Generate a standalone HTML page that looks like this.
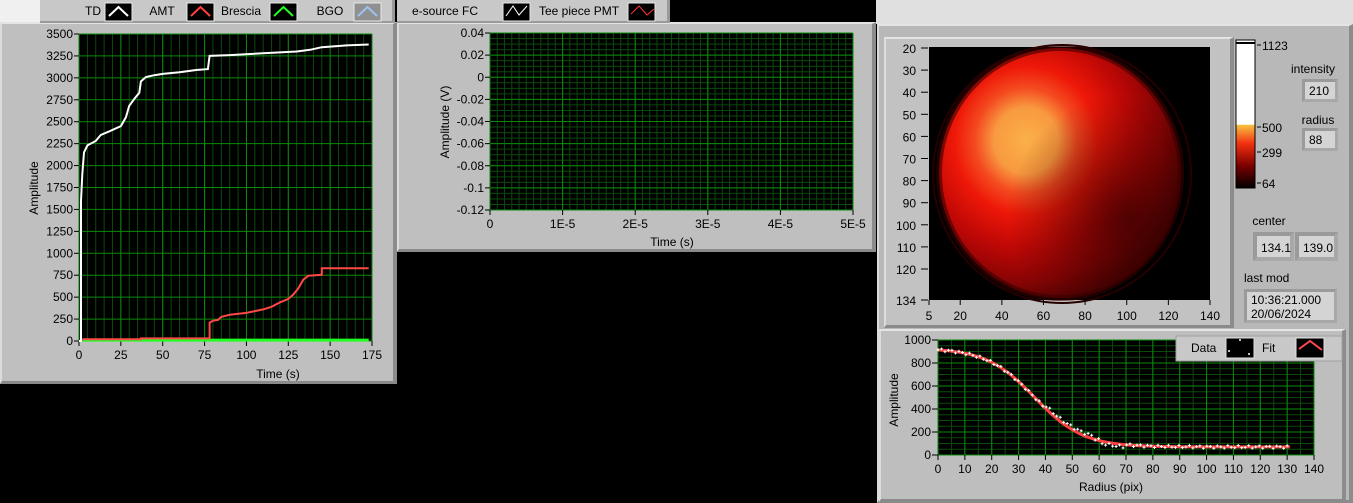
<!DOCTYPE html>
<html><head><meta charset="utf-8">
<style>
*{margin:0;padding:0;box-sizing:border-box}
body{width:1353px;height:503px;background:#000;position:relative;overflow:hidden;font-family:"Liberation Sans",sans-serif;font-size:12px;color:#000}
.a{position:absolute}
.panel{position:absolute;background:#bfbfbf;border-top:2px solid #e4e4e4;border-left:2px solid #dcdcdc;border-right:4px solid #8c8c8c;border-bottom:3px solid #8a8a8a}
.leg{position:absolute;background:#c8c8c8;border-bottom:2px solid #9a9a9a;border-right:3px solid #9a9a9a}
.box{position:absolute;background:#d4d4d4;border:3px solid #a8a8a8;border-top-color:#9a9a9a;border-left-color:#9a9a9a;padding-left:4px;font-size:12px}
svg{position:absolute;left:0;top:0}
</style></head><body>
<div class="a" style="left:0;top:0;width:40px;height:22px;background:#f0f0f0"></div>
<div class="a" style="left:876px;top:0;width:477px;height:24px;background:#e0e0e0"></div>

<div class="panel" style="left:0;top:22px;width:397px;height:362px"></div>
<div class="leg" style="left:40px;top:0;width:355px;height:23px"></div>
<div class="panel" style="left:397px;top:22px;width:479px;height:230px"></div>
<div class="leg" style="left:397px;top:0;width:273px;height:23px"></div>
<div class="panel" style="left:877px;top:24px;width:476px;height:479px;background:#b8b8b8"></div>
<div class="panel" style="left:884px;top:37px;width:350px;height:291px;background:#c2c2c2"></div>
<div class="panel" style="left:879px;top:329px;width:467px;height:173px;background:#bebebe"></div>

<svg id="s" width="1353" height="503" xmlns="http://www.w3.org/2000/svg" font-family="Liberation Sans, sans-serif" font-size="12">
<defs>
<radialGradient id="g1" cx="0.36" cy="0.37" r="0.66">
<stop offset="0" stop-color="#fbb048"/><stop offset="0.2" stop-color="#f89a40"/><stop offset="0.32" stop-color="#f44a20"/><stop offset="0.45" stop-color="#ee1808"/><stop offset="0.65" stop-color="#c00806"/><stop offset="0.85" stop-color="#8a0404"/><stop offset="1" stop-color="#500202"/></radialGradient>
<radialGradient id="g2" cx="0.78" cy="0.68" r="0.5"><stop offset="0" stop-color="#300000" stop-opacity="0.7"/><stop offset="1" stop-color="#300000" stop-opacity="0"/></radialGradient>
<linearGradient id="cb" x1="0" y1="0" x2="0" y2="1">
<stop offset="0" stop-color="#fff"/><stop offset="0.57" stop-color="#fff"/><stop offset="0.575" stop-color="#f8c040"/><stop offset="0.7" stop-color="#f23010"/><stop offset="0.85" stop-color="#7a0000"/><stop offset="1" stop-color="#000"/></linearGradient>
</defs>
</svg>
<script>
var s=document.getElementById('s'),NS='http://www.w3.org/2000/svg';
function el(t,a,txt){var e=document.createElementNS(NS,t);for(var k in a)e.setAttribute(k,a[k]);if(txt!==undefined)e.textContent=txt;s.appendChild(e);return e}
function T(x,y,t,anc,extra){var a={x:x,y:y,'text-anchor':anc||'start',fill:'#000'};for(var k in extra)a[k]=extra[k];return el('text',a,t)}
function grid(x0,y0,x1,y1,vx,hx,vmin,hmin){
 el('rect',{x:x0,y:y0,width:x1-x0,height:y1-y0,fill:'#000'});
 var v;
 if(vmin)for(v=x0;v<=x1+0.1;v+=vmin)el('line',{x1:v,y1:y0,x2:v,y2:y1,stroke:'#0b4a0b','stroke-width':1});
 if(hmin)for(v=y0;v<=y1+0.1;v+=hmin)el('line',{x1:x0,y1:v,x2:x1,y2:v,stroke:'#0b4a0b','stroke-width':1});
 for(v=x0;v<=x1+0.1;v+=vx)el('line',{x1:v,y1:y0,x2:v,y2:y1,stroke:'#0a8a0a','stroke-width':1});
 for(v=y0;v<=y1+0.1;v+=hx)el('line',{x1:x0,y1:v,x2:x1,y2:v,stroke:'#0a8a0a','stroke-width':1});
}
function legIcon(x,y,w,col,bg){el('rect',{x:x,y:y,width:w,height:18,fill:bg||'#000',stroke:'#e8e8e8'});el('polyline',{points:(x+4)+','+(y+13)+' '+(x+w/2)+','+(y+4)+' '+(x+w-4)+','+(y+13),fill:'none',stroke:col,'stroke-width':2});}
T(93,15,'TD','middle');legIcon(105,3,27,'#fff');
T(162,15,'AMT','middle');legIcon(187,3,27,'#ff4040');
T(241,15,'Brescia','middle');legIcon(270,3,27,'#20ff20');
T(330,15,'BGO','middle');legIcon(354,3,27,'#9cc4f0','#909090');
T(412,15,'e-source FC');
el('rect',{x:503,y:3,width:27,height:18,fill:'#000',stroke:'#e8e8e8'});el('polyline',{points:'506,16 513,6 519,15 527,6',fill:'none',stroke:'#fff','stroke-width':1});
T(539,15,'Tee piece PMT');
el('rect',{x:628,y:3,width:27,height:18,fill:'#000',stroke:'#e8e8e8'});el('polyline',{points:'631,14 639,6 647,15 654,9',fill:'none',stroke:'#ff3030','stroke-width':1});

var X0=79,X1=372,Y0=34,Y1=341;
grid(X0,Y0,X1,Y1,(X1-X0)/7,(Y1-Y0)/14,(X1-X0)/35,0);
for(var i=0;i<=14;i++){var v=3500-i*250,y=Y0+i*(Y1-Y0)/14;T(73,y+4,String(v),'end');el('line',{x1:74,y1:y,x2:79,y2:y,stroke:'#000'});}
for(i=0;i<=7;i++){var x=X0+i*(X1-X0)/7;T(x,359,String(i*25),'middle');el('line',{x1:x,y1:341,x2:x,y2:346,stroke:'#000'});}
T(278,378,'Time (s)','middle');
T(38,188,'Amplitude','middle',{transform:'rotate(-90 38 188)'});
function P(pts,col,sx,sy,w){var d=pts.map(function(p){return (X0+p[0]*sx).toFixed(1)+','+(Y1-p[1]*sy).toFixed(1)}).join(' ');el('polyline',{points:d,fill:'none',stroke:col,'stroke-width':w||2});}
var sx=(X1-X0)/175,sy=(Y1-Y0)/3500;
P([[2,10],[173,10]],'#20ff20',sx,sy,3);
P([[2,20],[37,20],[37,30],[78,30],[78,210],[80,230],[83,240],[85,275],[90,300],[100,320],[110,360],[115,390],[120,440],[125,480],[128,530],[131,600],[134,700],[137,745],[145,755],[145,830],[173,830]],'#ff4848',sx,sy);
P([[0,0],[1.2,0],[1.2,1600],[2,1900],[3,2150],[5,2230],[10,2280],[13,2350],[18,2390],[25,2450],[28,2550],[30,2680],[33,2760],[36,2830],[37,2960],[40,3010],[45,3030],[50,3045],[60,3065],[70,3090],[77,3100],[78,3250],[90,3260],[110,3280],[130,3300],[138,3320],[145,3350],[160,3370],[173,3380]],'#fff',sx,sy);

var MX0=490,MX1=853,MY0=33,MY1=210;
grid(MX0,MY0,MX1,MY1,(MX1-MX0)/5,(MY1-MY0)/8,(MX1-MX0)/50,(MY1-MY0)/32);
var ml=['0.04','0.02','0','-0.02','-0.04','-0.06','-0.08','-0.1','-0.12'];
for(i=0;i<=8;i++){var y=MY0+i*(MY1-MY0)/8;T(484,y+4,ml[i],'end');el('line',{x1:485,y1:y,x2:490,y2:y,stroke:'#000'});}
var mx=['0','1E-5','2E-5','3E-5','4E-5','5E-5'];
for(i=0;i<=5;i++){var x=MX0+i*(MX1-MX0)/5;T(x,228,mx[i],'middle');el('line',{x1:x,y1:210,x2:x,y2:215,stroke:'#000'});}
T(672,246,'Time (s)','middle');
T(449,122,'Amplitude (V)','middle',{transform:'rotate(-90 449 122)'});

el('rect',{x:929,y:47,width:281,height:253,fill:'#000'});
el('ellipse',{cx:1062,cy:174,rx:129,ry:129,fill:'none',stroke:'#250000','stroke-width':2});
el('ellipse',{cx:1060,cy:173,rx:121,ry:125,fill:'url(#g1)'});
el('ellipse',{cx:1060,cy:173,rx:121,ry:125,fill:'url(#g2)'});
el('ellipse',{cx:1060,cy:173,rx:121,ry:125,fill:'none',stroke:'#3a0000','stroke-width':6,'stroke-opacity':0.6});
var il=[20,30,40,50,60,70,80,90,100,110,120];
for(i=0;i<il.length;i++){var y=48+i*22.1;T(916,y+5,String(il[i]),'end');el('line',{x1:921,y1:y,x2:928,y2:y,stroke:'#000'});}
T(916,305,'134','end');el('line',{x1:921,y1:300,x2:928,y2:300,stroke:'#000'});
var ix=[5,20,40,60,80,100,120,140];
for(i=0;i<ix.length;i++){var x=929+(ix[i]-5)*281/135;T(x,320,String(ix[i]),'middle');el('line',{x1:x,y1:300,x2:x,y2:305,stroke:'#000'});}
el('rect',{x:1236,y:40,width:19,height:148,fill:'url(#cb)'});
el('rect',{x:1236,y:40,width:19,height:148,fill:'none',stroke:'#000','stroke-width':1});
el('line',{x1:1236,y1:43,x2:1255,y2:43,stroke:'#000','stroke-width':2});
[[45,'1123'],[127,'500'],[152,'299'],[183,'64']].forEach(function(a){el('line',{x1:1257,y1:a[0],x2:1261,y2:a[0],stroke:'#000'});T(1262,a[0]+5,a[1]);});
T(1313,73,'intensity','middle');T(1318,124,'radius','middle');T(1269,225,'center','middle');T(1244,282,'last mod');

var BX0=938,BX1=1314,BY0=340,BY1=455;
grid(BX0,BY0,BX1,BY1,(BX1-BX0)/14,(BY1-BY0)/5,(BX1-BX0)/28,(BY1-BY0)/20);
for(i=0;i<=5;i++){var y=BY0+i*(BY1-BY0)/5;T(931,y+4,String(1000-i*200),'end');el('line',{x1:932,y1:y,x2:938,y2:y,stroke:'#000'});}
for(i=0;i<=14;i++){var x=BX0+i*(BX1-BX0)/14;T(x,473,String(i*10),'middle');el('line',{x1:x,y1:455,x2:x,y2:460,stroke:'#000'});}
T(1111,491,'Radius (pix)','middle');
T(898,400,'Amplitude','middle',{transform:'rotate(-90 898 400)'});
function f(r){return 70+860/(1+Math.exp((r-36)/9));}
var pts=[];for(var r=0;r<=131;r+=1)pts.push((BX0+r*(BX1-BX0)/140).toFixed(1)+','+(BY1-f(r)*(BY1-BY0)/1000).toFixed(1));
el('polyline',{points:pts.join(' '),fill:'none',stroke:'#ff4040','stroke-width':3});
for(r=0;r<=131;r+=1.3){var yy=f(r)+(Math.sin(r*1.7)*12)+(r>40&&r<60?25:0)-(r>58&&r<70?20:0);var x=BX0+r*(BX1-BX0)/140,y=BY1-yy*(BY1-BY0)/1000;el('path',{d:'M'+(x-1.5)+' '+y+'h3M'+x+' '+(y-1.5)+'v3',stroke:'#fff','stroke-width':1});}
el('rect',{x:1176,y:336,width:166,height:25,fill:'#c8c8c8',stroke:'#a0a0a0'});
T(1191,352,'Data');
el('rect',{x:1226,y:338,width:28,height:20,fill:'#000',stroke:'#e0e0e0'});
el('path',{d:'M1239 340h2M1240 339v2M1228 351h2M1229 350v2M1248 354h2M1249 353v2',stroke:'#fff'});
T(1262,352,'Fit');
el('rect',{x:1296,y:338,width:28,height:20,fill:'#000',stroke:'#e0e0e0'});
el('polyline',{points:'1299,349 1310,341 1322,350',fill:'none',stroke:'#ff4848','stroke-width':2});
</script>
<div class="box" style="left:1302px;top:79px;width:36px;height:23px;padding-top:2px">210</div>
<div class="box" style="left:1302px;top:128px;width:36px;height:23px;padding-top:2px">88</div>
<div class="box" style="left:1253px;top:232px;width:41px;height:29px;padding-top:5px;border-width:4px">134.1</div>
<div class="box" style="left:1295px;top:232px;width:43px;height:29px;padding-top:5px;border-width:4px">139.0</div>
<div class="box" style="left:1244px;top:289px;width:93px;height:34px;line-height:14px;padding-top:1px">10:36:21.000<br>20/06/2024</div>
</body></html>
